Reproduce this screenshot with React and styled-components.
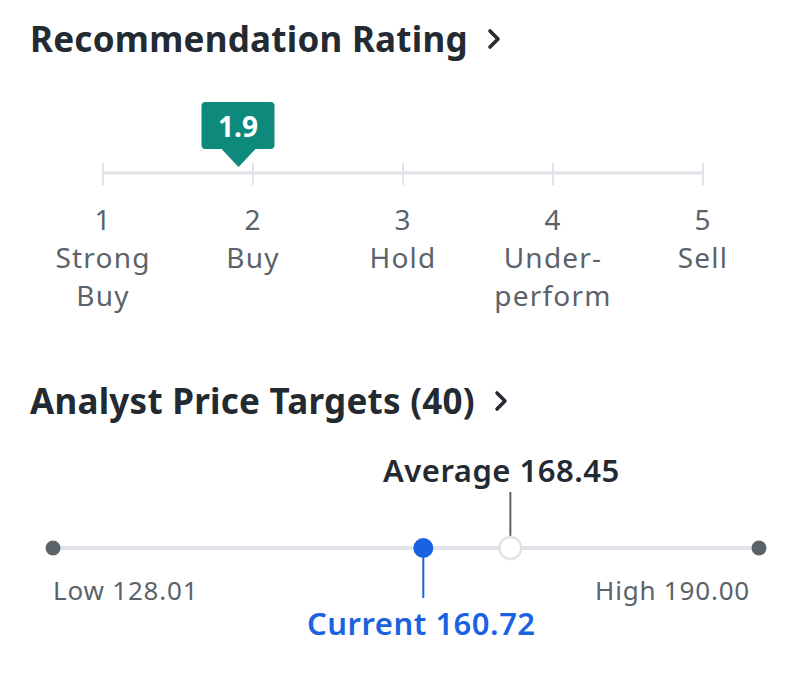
import React from 'react';
import styled, { createGlobalStyle } from 'styled-components';

const GlobalStyle = createGlobalStyle`
  html, body {
    margin: 0;
    padding: 0;
    background: #ffffff;
  }
  body {
    font-family: "Noto Sans", "Open Sans", Arial, sans-serif;
    color: #232a31;
  }
`;

const Page = styled.div`
  width: 802px;
  padding: 0 0 0 30px;
  box-sizing: border-box;
`;

const Title = styled.h2`
  display: flex;
  align-items: center;
  gap: 19px;
  margin: ${(p) => p.$top}px 0 0 0;
  font-size: 35px;
  line-height: 40px;
  font-weight: 700;
  color: #232a31;
  letter-spacing: 0.25px;
`;

const Chevron = () => (
  <svg width="14" height="22" viewBox="0 0 14 22" fill="none">
    <polyline points="3,3 11,11 3,19" stroke="#232a31" strokeWidth="3.6" strokeLinecap="round" strokeLinejoin="round" />
  </svg>
);

/* ---------- recommendation rating ---------- */

const RatingChart = styled.div`
  position: relative;
  width: 600px;
  height: 22px;
  margin: 104px 0 0 73px;
`;

const Badge = styled.div`
  position: absolute;
  top: -61px;
  transform: translateX(-50%);
  display: flex;
  flex-direction: column;
  align-items: center;
`;

const BadgeBox = styled.div`
  width: 73px;
  height: 47px;
  border-radius: 4px;
  background: #0e8a7d;
  color: #fff;
  font-size: 28px;
  font-weight: 700;
  display: flex;
  align-items: center;
  justify-content: center;
`;

const BadgePointer = styled.div`
  width: 0;
  height: 0;
  border-left: 17px solid transparent;
  border-right: 17px solid transparent;
  border-top: 18px solid #0e8a7d;
`;

const Labels = styled.div`
  display: grid;
  grid-template-columns: repeat(5, 150px);
  margin: 15px 0 0 -2px;
`;

const Label = styled.div`
  display: flex;
  flex-direction: column;
  align-items: center;
  font-size: 28px;
  line-height: 38px;
  letter-spacing: 1.2px;
  color: #5b636a;
`;

const ratings = [
  { n: 1, lines: ['Strong', 'Buy'] },
  { n: 2, lines: ['Buy'] },
  { n: 3, lines: ['Hold'] },
  { n: 4, lines: ['Under-', 'perform'] },
  { n: 5, lines: ['Sell'] },
];

const RatingScale = ({ value }) => {
  const left = ((value - 1) / 4) * 100;
  return (
    <>
      <RatingChart>
        <svg width="600" height="22" style={{ overflow: 'visible', display: 'block' }}>
          <line x1="0" y1="10" x2="600" y2="10" stroke="#e0e4e9" strokeWidth="3" />
          {[0, 150, 300, 450, 600].map((x) => (
            <line key={x} x1={x} y1="0" x2={x} y2="22" stroke="#e0e4e9" strokeWidth="2" />
          ))}
        </svg>
        <Badge style={{ left: `${left}%` }}>
          <BadgeBox>{value.toFixed(1)}</BadgeBox>
          <BadgePointer />
        </Badge>
      </RatingChart>
      <Labels>
        {ratings.map((r) => (
          <Label key={r.n}>
            <span>{r.n}</span>
            {r.lines.map((l) => (
              <span key={l}>{l}</span>
            ))}
          </Label>
        ))}
      </Labels>
    </>
  );
};

/* ---------- analyst price targets ---------- */

const TargetsChart = styled.div`
  position: relative;
  width: 706px;
  height: 232px;
  margin-left: 23px;
`;

const Marker = styled.div`
  position: absolute;
  white-space: nowrap;
  font-size: ${(p) => p.$size}px;
  line-height: ${(p) => p.$lh}px;
  letter-spacing: ${(p) => p.$ls}px;
  font-weight: ${(p) => (p.$strong ? 600 : 400)};
  color: ${(p) => p.$color};
  transform: ${(p) => (p.$center ? 'translateX(-50%)' : 'none')};
`;

const low = 128.01;
const high = 190.0;
const current = 160.72;
const average = 168.45;

const PriceTargets = () => {
  const pos = (v) => 2 + ((v - low) / (high - low)) * 698;
  const cx = pos(current);
  const ax = pos(average);
  return (
    <TargetsChart>
      <svg width="706" height="232" style={{ overflow: 'visible', display: 'block' }}>
        <line x1="0" y1="127" x2="706" y2="127" stroke="#e0e4e9" strokeWidth="4" />
        <circle cx="0" cy="127" r="7.5" fill="#5b636a" />
        <circle cx="706" cy="127" r="7.5" fill="#5b636a" />
        <line x1={ax} y1="71" x2={ax} y2="116" stroke="#5b636a" strokeWidth="2" />
        <circle cx={ax} cy="127" r="11" fill="#fff" stroke="#e0e4e9" strokeWidth="2.5" />
        <line x1={cx} y1="127" x2={cx} y2="177" stroke="#1a62e0" strokeWidth="2" />
        <circle cx={cx} cy="127" r="10" fill="#1a62e0" />
      </svg>
      <Marker $center $strong $size={31} $lh={36} $ls={0.5} $color="#232a31" style={{ left: ax - 9, top: 31 }}>
        Average {average.toFixed(2)}
      </Marker>
      <Marker $size={26} $lh={30} $ls={0.8} $color="#5b636a" style={{ left: 0, top: 154 }}>
        Low {low.toFixed(2)}
      </Marker>
      <Marker $size={26} $lh={30} $ls={0.8} $color="#5b636a" style={{ right: 9, top: 154 }}>
        High {high.toFixed(2)}
      </Marker>
      <Marker $center $strong $size={31} $lh={36} $ls={0.5} $color="#1a62e0" style={{ left: cx - 2, top: 184 }}>
        Current {current.toFixed(2)}
      </Marker>
    </TargetsChart>
  );
};

export default function App() {
  return (
    <Page>
      <GlobalStyle />
      <Title $top={19}>
        Recommendation Rating <Chevron />
      </Title>
      <RatingScale value={1.9} />
      <Title $top={67}>
        Analyst Price Targets (40) <Chevron />
      </Title>
      <PriceTargets />
    </Page>
  );
}
